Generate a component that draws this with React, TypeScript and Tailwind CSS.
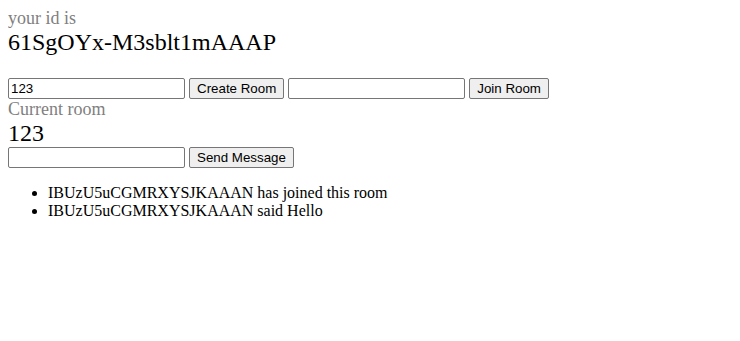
import { useState } from "react"

const inputCls =
  "w-[177px] h-[21px] border border-[#767676] rounded-[2px] px-[2px] bg-white text-[13.33px] font-['Liberation_Sans',Arial,sans-serif] text-black outline-none"
const buttonCls =
  "h-[21px] border border-[#767676] rounded-[2px] px-[7px] bg-[#efefef] text-[13.33px] leading-none font-['Liberation_Sans',Arial,sans-serif] text-black"

export default function App() {
  const [createId, setCreateId] = useState("123")
  const [joinId, setJoinId] = useState("")
  const [message, setMessage] = useState("")

  const messages = [
    "IBUzU5uCGMRXYSJKAAAN has joined this room",
    "IBUzU5uCGMRXYSJKAAAN said Hello",
  ]

  return (
    <div className="m-2 font-['Liberation_Serif','Times_New_Roman',serif] text-base text-black leading-[normal]">
      <div className="text-[18px] text-[#808080]">your id is</div>
      <div className="text-[24px]">61SgOYx-M3sblt1mAAAP</div>

      <div className="mt-[22px] flex items-center gap-[4px]">
        <input className={inputCls} value={createId} onChange={(e) => setCreateId(e.target.value)} />
        <button className={buttonCls}>Create Room</button>
        <input className={inputCls} value={joinId} onChange={(e) => setJoinId(e.target.value)} />
        <button className={buttonCls}>Join Room</button>
      </div>

      <div className="text-[18px] text-[#808080]">Current room</div>
      <div className="text-[24px]">123</div>
      <div className="flex items-center gap-[4px]">
        <input className={inputCls} value={message} onChange={(e) => setMessage(e.target.value)} />
        <button className={buttonCls}>Send Message</button>
      </div>

      <ul className="my-4 pl-10 list-disc">
        {messages.map((m, i) => (
          <li key={i}>{m}</li>
        ))}
      </ul>
    </div>
  )
}
